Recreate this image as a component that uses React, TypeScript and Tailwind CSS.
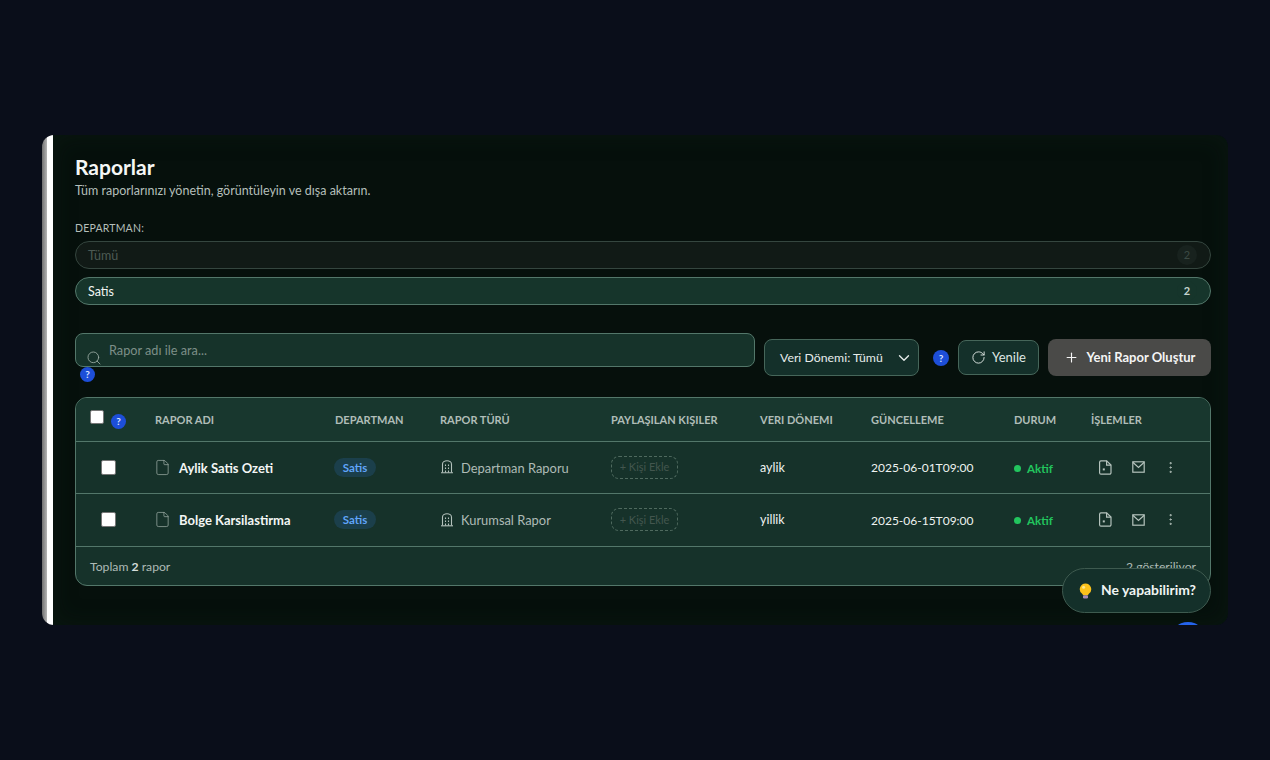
import React from 'react';
import { ChevronDown, MoreVertical, Plus, RotateCw, Search, File } from 'lucide-react';

const BuildingIcon = () => (
  <svg width="14" height="14" viewBox="0 0 14 14" fill="none" stroke="currentColor" strokeWidth="1.1">
    <path d="M2.5 12.5V4.2a4.5 3.4 0 0 1 9 0v8.3" />
    <path d="M1 12.8h12" />
    <path d="M5.5 4.6v1.4M8.5 4.6v1.4M5.5 7.6v1.4M8.5 7.6v1.4M5.5 10.4v2.2M8.5 10.4v2.2" />
  </svg>
);

const FileDotIcon = () => (
  <svg width="13" height="15" viewBox="0 0 13 15" fill="none" stroke="currentColor" strokeWidth="1.2">
    <path d="M2 .8h5.6L12 5v7.7a1.5 1.5 0 0 1-1.5 1.5H2A1.5 1.5 0 0 1 .6 12.7V2.3A1.5 1.5 0 0 1 2 .8z" />
    <path d="M7.6 .8v4.4H12" />
    <rect x="3.8" y="8.4" width="2" height="2" fill="currentColor" stroke="none" />
  </svg>
);

const MailIcon = () => (
  <svg width="13" height="12" viewBox="0 0 13 12" fill="none" stroke="currentColor" strokeWidth="1.2">
    <rect x=".8" y=".8" width="11.4" height="10.4" />
    <path d="M.8 1.2l5.7 5.3 5.7-5.3" />
  </svg>
);

const BulbIcon = () => (
  <svg width="13" height="16" viewBox="0 0 13 16">
    <path d="M6.5.5a5.7 5.7 0 0 0-3.6 10.1c.6.5.9 1 1 1.6h5.2c.1-.6.4-1.1 1-1.6A5.7 5.7 0 0 0 6.5.5z" fill="#fcc21b" />
    <circle cx="4.6" cy="4.2" r="1.5" fill="#fde68a" />
    <rect x="4" y="12.2" width="5" height="3.3" rx="1.2" fill="#a78bb5" />
  </svg>
);

const Help = ({ className = '' }: { className?: string }) => (
  <span className={`flex h-[15px] w-[15px] shrink-0 items-center justify-center rounded-full bg-[#1d4ed8] text-[10px] font-bold text-[#dbe4ff] ${className}`}>?</span>
);

const reports = [
  { name: 'Aylik Satis Ozeti', type: 'Departman Raporu', period: 'aylik', updated: '2025-06-01T09:00' },
  { name: 'Bolge Karsilastirma', type: 'Kurumsal Rapor', period: 'yillik', updated: '2025-06-15T09:00' },
];

const headers = ['RAPOR ADI', 'DEPARTMAN', 'RAPOR TÜRÜ', 'PAYLAŞILAN KIŞILER', 'VERI DÖNEMI', 'GÜNCELLEME', 'DURUM', 'İŞLEMLER'];

const App = () => {
  return (
    <div className="h-[760px] w-[1270px] overflow-hidden bg-[#0a0e1a] pl-[42px] pt-[135px] font-['Lato',sans-serif]">
      <div className="relative flex h-[490px] w-[1186px]">
        <div className="flex h-full w-full overflow-hidden rounded-xl">
          <div className="w-[5px] shrink-0 bg-gradient-to-r from-[#707070] to-[#b5b5b5]" />
          <div className="w-[6px] shrink-0 bg-white" />
          <main className="flex-1 bg-[#06100c] pl-[22px] pr-[17px] pt-[18px] shadow-[inset_0_0_24px_rgba(16,40,28,0.3)]">
            <h1 className="text-[21px] font-bold leading-[28px] text-[#f5f7f6]">Raporlar</h1>
            <p className="mt-px text-[12.5px] leading-[18px] text-[#b4bfba]">Tüm raporlarınızı yönetin, görüntüleyin ve dışa aktarın.</p>

            <div className="mt-[20px] text-[10.5px] leading-[16px] tracking-[0.2px] text-[#b4bfba]">DEPARTMAN:</div>
            <div className="mt-[5px] flex h-[28px] items-center justify-between rounded-full border border-[#35463f] bg-[#111a16] pl-3 pr-[13px] text-[12.5px] text-[#4d5a54]">
              <span className="pt-[2px]">Tümü</span>
              <span className="flex h-5 w-5 items-center justify-center rounded-full bg-[#18221e] text-[11px] text-[#3c4a44]">2</span>
            </div>
            <div className="mt-2 flex h-[28px] items-center justify-between rounded-full border border-[#53776a] bg-[#16352b] pl-3 pr-[13px] text-[12.5px] text-[#f1f5f3]">
              <span className="pt-[2px]">Satis</span>
              <span className="flex h-5 w-5 items-center justify-center rounded-full bg-[#16352b] text-[11px] font-bold text-[#c5d3cd]">2</span>
            </div>

            <div className="mt-7 flex items-start">
              <div className="relative h-[34px] w-[680px] rounded-lg border border-[#53776a] bg-[#16332a] text-[#7d8f88]">
                <Search size={16} strokeWidth={1.3} className="absolute left-[10px] top-[16px] text-[#9aaba4]" />
                <span className="absolute left-[33px] top-[8px] text-[12.7px] leading-[17px]">Rapor adı ile ara...</span>
                <Help className="absolute left-[4px] top-[33px]" />
              </div>
              <div className="ml-[9px] mt-[6px] flex h-[37px] w-[155px] items-center justify-between rounded-lg border border-[#46665a] bg-[#14302a] pl-[15px] pr-[4px] text-[12.3px] text-[#e6ecea]">
                <span className="pt-px">Veri Dönemi: Tümü</span>
                <ChevronDown size={18} strokeWidth={1.8} className="mr-[1px] text-[#e6ecea]" />
              </div>
              <Help className="ml-[14px] mt-[17px] h-[16px] w-[16px]" />
              <button className="ml-[9px] mt-[7px] flex h-[35px] w-[81px] items-center justify-center gap-[6px] rounded-lg border border-[#46665a] bg-[#14302a] text-[13px] text-[#dfe6e3]">
                <RotateCw size={15} strokeWidth={1.5} />
                <span className="pt-px">Yenile</span>
              </button>
              <button className="ml-[9px] mt-[6px] flex h-[37px] w-[163px] items-center justify-center gap-[8px] rounded-lg bg-[#4a4a48] text-[13px] font-bold text-[#f5f5f5]">
                <Plus size={15} strokeWidth={1.8} />
                <span className="pt-px">Yeni Rapor Oluştur</span>
              </button>
            </div>

            <div className="mt-[21px] h-[189px] overflow-hidden rounded-xl border border-[#53776a] bg-[#16322a]">
              <table className="w-[1134px] table-fixed border-collapse">
                <colgroup>
                  <col className="w-[64px]" />
                  <col className="w-[180px]" />
                  <col className="w-[105px]" />
                  <col className="w-[171px]" />
                  <col className="w-[149px]" />
                  <col className="w-[111px]" />
                  <col className="w-[143px]" />
                  <col className="w-[77px]" />
                  <col />
                </colgroup>
                <thead>
                  <tr className="h-[43px] border-b border-[#53776a] bg-[#18372e]">
                    <th className="relative pl-[14px] text-left">
                      <span className="block h-[14px] w-[14px] -translate-y-[2px] rounded-[2px] border border-[#767676] bg-white" />
                      <Help className="absolute left-[35px] top-[16px]" />
                    </th>
                    {headers.map((h) => (
                      <th key={h} className="pl-[15px] pt-[2px] text-left text-[11px] font-bold text-[#b0bdb8]">{h}</th>
                    ))}
                    <th />
                  </tr>
                </thead>
                <tbody>
                  {reports.map((r) => (
                    <tr key={r.name} className="h-[52.5px] border-b border-[#53776a]">
                      <td className="pl-[25px]">
                        <span className="block h-[15px] w-[15px] rounded-[2px] border border-[#767676] bg-white" />
                      </td>
                      <td className="pl-[15px]">
                        <div className="flex items-center gap-[8px]">
                          <File size={17} strokeWidth={1} className="-ml-px shrink-0 text-[#a3b2ac]" />
                          <span className="pt-[2px] text-[13px] font-bold text-[#f3f6f5]">{r.name}</span>
                        </div>
                      </td>
                      <td className="pl-[14px]">
                        <span className="flex h-[19px] w-[42px] items-center justify-center rounded-full bg-[#1b3f4b] text-[11.5px] font-bold text-[#60a5fa]">Satis</span>
                      </td>
                      <td className="pl-[15px]">
                        <div className="flex items-center gap-[7px] text-[12.9px] text-[#aebbb6]">
                          <span className="text-[#b4c2bc]"><BuildingIcon /></span>
                          <span className="pt-[2px]">{r.type}</span>
                        </div>
                      </td>
                      <td className="pl-[15px]">
                        <span className="flex h-[23px] w-[67px] items-center justify-center rounded-lg border border-dashed border-[#4f6a5f] text-[11px] text-[#43564e]">+ Kişi Ekle</span>
                      </td>
                      <td className="pl-[15px] pt-[2px] text-[12.5px] text-[#eef2f0]">{r.period}</td>
                      <td className="pl-[15px] pt-[2px] text-[12px] text-[#eef2f0]">{r.updated}</td>
                      <td className="pl-[15px] pt-[2px]">
                        <div className="flex items-center gap-[6px] text-[11.6px] font-bold text-[#22c55e]">
                          <span className="h-[7px] w-[7px] rounded-full bg-[#22c55e]" />
                          Aktif
                        </div>
                      </td>
                      <td colSpan={2} className="pl-[23px]">
                        <div className="flex items-center text-[#b4c2bc]">
                          <FileDotIcon />
                          <span className="ml-[20px]"><MailIcon /></span>
                          <MoreVertical size={15} strokeWidth={1.5} className="ml-[18px]" />
                        </div>
                      </td>
                    </tr>
                  ))}
                </tbody>
              </table>
              <div className="flex h-[38px] items-center justify-between pl-[14px] pr-[14px] pt-[3px] text-[12.2px] text-[#aebbb6]">
                <span>Toplam <b className="font-bold text-[#d5dedb]">2</b> rapor</span>
                <span>2 gösteriliyor</span>
              </div>
            </div>
          </main>
        </div>

        {/* floating help button + the blue fab clipped by the window edge */}
        <div className="absolute left-[1020px] top-[433px] flex h-[45px] w-[149px] items-center gap-[9px] rounded-full border border-[#3e5a4f] bg-[#14302a] pl-[16px] text-[13.9px] font-bold text-[#f1f5f3]">
          <BulbIcon />
          Ne yapabilirim?
        </div>
        <div className="absolute left-[1128px] top-[487px] h-[3px] w-[36px] overflow-hidden">
          <div className="h-[36px] w-[36px] rounded-full bg-[#2563eb]" />
        </div>
      </div>
    </div>
  );
};

export default App;
